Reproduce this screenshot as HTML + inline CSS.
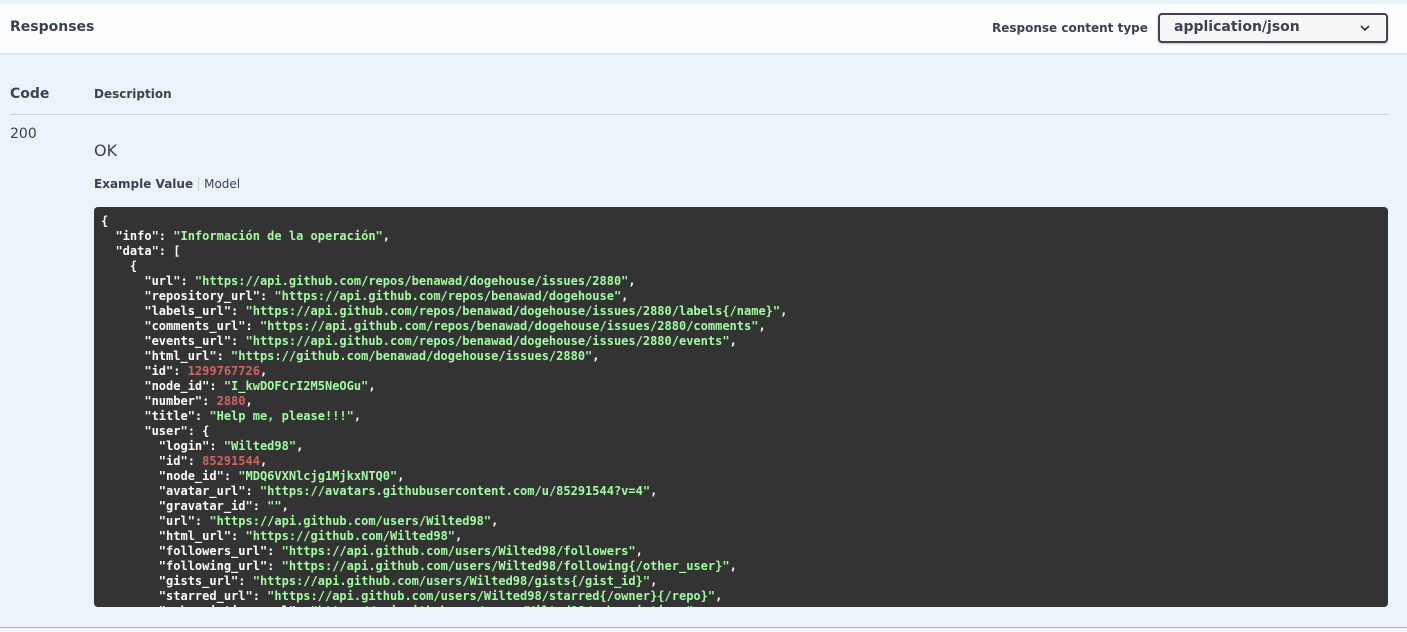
<!DOCTYPE html>
<html><head><meta charset="utf-8"><style>
*{margin:0;padding:0;box-sizing:border-box}
body{width:1407px;height:632px;overflow:hidden;background:#ebf3fb;font-family:"DejaVu Sans","Liberation Sans",sans-serif;color:#3b4151;position:relative}
.hdr{position:absolute;left:0;top:4px;width:1407px;height:49px;background:#fcfdfe;box-shadow:0 1px 2px rgba(0,0,0,.12)}
.hdr h4{position:absolute;left:10px;top:15px;font-size:14px;font-weight:bold}
.lbl{position:absolute;left:992px;top:17px;font-size:12px;font-weight:bold}
.sel{position:absolute;left:1158px;top:9px;width:230px;height:30px;border:2px solid #41444e;border-radius:4px;background:#f7f7f7;box-shadow:0 1px 2px rgba(0,0,0,.25);font-size:14px;font-weight:bold;padding:4px 14px}
.sel svg{position:absolute;right:16px;top:10px}
.th{position:absolute;top:87px;font-size:12px;font-weight:bold}
.line{position:absolute;left:10px;top:114px;width:1378px;height:1px;background:#c8cfd9}
.code{position:absolute;left:10px;top:126px;font-size:14px}
.ok{position:absolute;left:94px;top:141px;font-size:16px}
.tabs{position:absolute;left:94px;top:177px;font-size:12px}
.tabs b{padding-right:5px;border-right:1px solid #c8cfd9}
.tabs span{padding-left:5px}
pre{position:absolute;left:94px;top:207px;width:1294px;height:400px;background:#333;border-radius:4px;overflow:hidden;padding:7px 7px;font-family:"DejaVu Sans Mono","Liberation Mono",monospace;font-size:12px;font-weight:bold;line-height:15px;color:#fff}
.s{color:#a2fca2}.n{color:#d36363}
.bot{position:absolute;left:0;top:627px;width:1407px;height:5px;background:#f3f3f3;border-top:1px solid #8fb9e6}
</style></head><body>
<div class="hdr"><h4>Responses</h4><div class="lbl">Response content type</div>
<div class="sel">application/json<svg width="10" height="6" viewBox="0 0 10 6"><path d="M1 1l4 4 4-4" fill="none" stroke="#333" stroke-width="1.6"/></svg></div></div>
<div class="th" style="left:10px;font-size:14px;top:86px">Code</div>
<div class="th" style="left:94px">Description</div>
<div class="line"></div>
<div class="code">200</div>
<div class="ok">OK</div>
<div class="tabs"><b>Example Value</b><span>Model</span></div>
<pre>{
  "info": <span class="s">"Información de la operación"</span>,
  "data": [
    {
      "url": <span class="s">"https://api.github.com/repos/benawad/dogehouse/issues/2880"</span>,
      "repository_url": <span class="s">"https://api.github.com/repos/benawad/dogehouse"</span>,
      "labels_url": <span class="s">"https://api.github.com/repos/benawad/dogehouse/issues/2880/labels{/name}"</span>,
      "comments_url": <span class="s">"https://api.github.com/repos/benawad/dogehouse/issues/2880/comments"</span>,
      "events_url": <span class="s">"https://api.github.com/repos/benawad/dogehouse/issues/2880/events"</span>,
      "html_url": <span class="s">"https://github.com/benawad/dogehouse/issues/2880"</span>,
      "id": <span class="n">1299767726</span>,
      "node_id": <span class="s">"I_kwDOFCrI2M5NeOGu"</span>,
      "number": <span class="n">2880</span>,
      "title": <span class="s">"Help me, please!!!"</span>,
      "user": {
        "login": <span class="s">"Wilted98"</span>,
        "id": <span class="n">85291544</span>,
        "node_id": <span class="s">"MDQ6VXNlcjg1MjkxNTQ0"</span>,
        "avatar_url": <span class="s">"https://avatars.githubusercontent.com/u/85291544?v=4"</span>,
        "gravatar_id": <span class="s">""</span>,
        "url": <span class="s">"https://api.github.com/users/Wilted98"</span>,
        "html_url": <span class="s">"https://github.com/Wilted98"</span>,
        "followers_url": <span class="s">"https://api.github.com/users/Wilted98/followers"</span>,
        "following_url": <span class="s">"https://api.github.com/users/Wilted98/following{/other_user}"</span>,
        "gists_url": <span class="s">"https://api.github.com/users/Wilted98/gists{/gist_id}"</span>,
        "starred_url": <span class="s">"https://api.github.com/users/Wilted98/starred{/owner}{/repo}"</span>,
        "subscriptions_url": <span class="s">"https://api.github.com/users/Wilted98/subscriptions"</span>,
</pre>
<div class="bot"></div>
</body></html>
